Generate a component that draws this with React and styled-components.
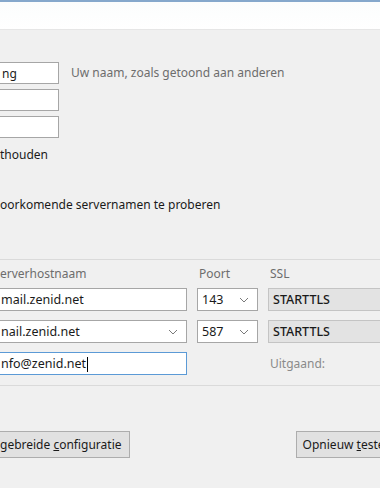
import styled, { createGlobalStyle } from 'styled-components';

const Global = createGlobalStyle`
  html, body { margin: 0; padding: 0; background: #f0f0f0; }
  body { font-family: "Noto Sans", "Open Sans", sans-serif; font-size: 12px; color: #1a1a1a; }
`;

const Page = styled.div`
  width: 380px;
  height: 488px;
  overflow: hidden;
  background: #f0f0f0;
`;

const TopBar = styled.div`
  height: 27px;
  border-top: 2px solid #85a8cc;
  background: linear-gradient(#fbfdfd, #ffffff);
  border-bottom: 1px solid #e6e6e6;
`;

const Identity = styled.div`
  display: flex;
  flex-direction: column;
  gap: 5px;
  padding-top: 32px;
`;

const FieldRow = styled.div`
  display: flex;
  align-items: center;
  gap: 12px;
  height: 22px;
`;

const Field = styled.input`
  box-sizing: border-box;
  height: 22px;
  width: ${p => p.$w}px;
  margin-left: -4px;
  padding: 0 0 0 5px;
  border: 1px solid #a6a6a6;
  background: #fff;
  font: inherit;
  font-size: 12px;
  color: #1a1a1a;
  outline: none;
`;

const Hint = styled.span`
  color: #6d6d6d;
  margin-top: -1px;
`;

const Plain = styled.div`
  margin-top: ${p => p.$top}px;
  height: 18px;
  line-height: 18px;
`;

const Divider = styled.hr`
  margin: ${p => p.$top}px 0 0;
  border: 0;
  border-top: 1px solid #dadada;
`;

const ServerGrid = styled.div`
  display: grid;
  grid-template-columns: 193px 61px 130px;
  column-gap: 10px;
  row-gap: 9px;
  margin-left: -6px;
  margin-top: 6px;
  align-items: center;
`;

const Head = styled.div`
  color: #6d6d6d;
  height: 16px;
  line-height: 16px;
  margin-bottom: -3px;
  padding-left: ${p => p.$pad || 0}px;
`;

const Box = styled.div`
  box-sizing: border-box;
  height: 23px;
  display: flex;
  align-items: center;
  justify-content: space-between;
  padding: 0 8px 0 ${p => p.$pad || 4}px;
  background: ${p => (p.$disabled ? '#e3e3e3' : '#fff')};
  border: 1px solid ${p => (p.$focus ? '#5b9ad6' : p.$disabled ? '#c4c4c4' : '#a6a6a6')};
  font-size: 12.5px;
  color: #1a1a1a;
  font-weight: ${p => (p.$disabled ? 500 : 400)};
`;

const Caret = styled.span`
  display: inline-block;
  width: 1px;
  height: 15px;
  background: #000;
  margin-left: 1px;
  vertical-align: middle;
`;

const Chevron = () => (
  <svg width="10" height="6" viewBox="0 0 10 6">
    <path d="M1 1l4 4 4-4" fill="none" stroke="#7a7a7a" strokeWidth="1" />
  </svg>
);

const Muted = styled.div`
  color: #8a8a8a;
  padding-left: 2px;
  font-size: 12px;
`;

const Buttons = styled.div`
  display: flex;
  justify-content: space-between;
  margin-top: 45px;
`;

const Button = styled.button`
  box-sizing: border-box;
  height: 27px;
  padding: 0 ${p => p.$pad || 10}px;
  margin-left: ${p => p.$ml || 0}px;
  margin-right: ${p => p.$mr || 0}px;
  background: #e1e1e1;
  border: 1px solid #adadad;
  font: inherit;
  font-size: 12px;
  color: #1a1a1a;
  white-space: nowrap;
  u { text-decoration: underline; }
`;

export default function App() {
  return (
    <Page>
      <Global />
      <TopBar />
      <Identity>
        <FieldRow>
          <Field $w={63} defaultValue="ng" />
          <Hint>Uw naam, zoals getoond aan anderen</Hint>
        </FieldRow>
        <FieldRow>
          <Field $w={63} />
        </FieldRow>
        <FieldRow>
          <Field $w={63} />
        </FieldRow>
      </Identity>
      <Plain $top={8}>thouden</Plain>
      <Plain $top={32}>oorkomende servernamen te proberen</Plain>
      <Divider $top={45} />
      <ServerGrid>
        <Head $pad={6}>erverhostnaam</Head>
        <Head $pad={2}>Poort</Head>
        <Head $pad={2}>SSL</Head>

        <Box $pad={6}>mail.zenid.net</Box>
        <Box>143<Chevron /></Box>
        <Box $disabled $pad={4}>STARTTLS</Box>

        <Box $pad={6}>nail.zenid.net<Chevron /></Box>
        <Box>587<Chevron /></Box>
        <Box $disabled $pad={4}>STARTTLS</Box>

        <Box $focus $pad={6}><span>nfo@zenid.net<Caret /></span></Box>
        <div />
        <Muted>Uitgaand:</Muted>
      </ServerGrid>
      <Divider $top={10} />
      <Buttons>
        <Button $ml={-8} $pad={7}>gebreide <u>c</u>onfiguratie</Button>
        <Button $mr={-19} $pad={6}>Opnieuw <u>t</u>esten</Button>
      </Buttons>
    </Page>
  );
}
